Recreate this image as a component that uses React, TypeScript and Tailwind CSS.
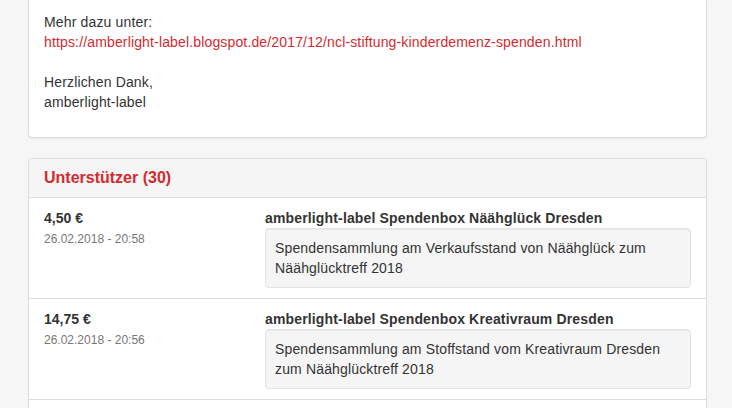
export default function App() {
  const supporters = [
    {
      amount: "4,50 €",
      date: "26.02.2018 - 20:58",
      name: "amberlight-label Spendenbox Näähglück Dresden",
      note: "Spendensammlung am Verkaufsstand von Näähglück zum Näähglücktreff 2018",
    },
    {
      amount: "14,75 €",
      date: "26.02.2018 - 20:56",
      name: "amberlight-label Spendenbox Kreativraum Dresden",
      note: "Spendensammlung am Stoffstand vom Kreativraum Dresden zum Näähglücktreff 2018",
    },
  ];

  return (
    <div className="min-h-screen h-[408px] overflow-hidden bg-[#f6f6f6] font-['Liberation_Sans',Arial,sans-serif] text-[14px] leading-[20px] tracking-[0.15px] text-[#333]">
      <div className="ml-[28px] w-[679px]">
        {/* Description card (scrolled, top is cut off) */}
        <div className="bg-white border border-t-0 border-[#ddd] rounded-b-[4px] shadow-[0_1px_1px_rgba(0,0,0,0.05)] px-[15px] pt-[12px] pb-[15px]">
          <p className="mb-[20px]">
            Mehr dazu unter:
            <br />
            <a href="#" className="text-[#d42a2f]">
              https://amberlight-label.blogspot.de/2017/12/ncl-stiftung-kinderdemenz-spenden.html
            </a>
          </p>
          <p className="mb-[10px]">
            Herzlichen Dank,
            <br />
            amberlight-label
          </p>
        </div>

        {/* Supporters */}
        <div className="mt-[20px] bg-white border border-[#ddd] rounded-[4px] shadow-[0_1px_1px_rgba(0,0,0,0.05)]">
          <div className="bg-[#f5f5f5] border-b border-[#ddd] rounded-t-[3px] px-[15px] py-[10px]">
            <h3 className="text-[16px] leading-[18px] font-bold tracking-normal text-[#d42a2f]">Unterstützer (30)</h3>
          </div>
          {supporters.map((s, i) => (
            <div key={i} className="flex border-b border-[#ddd] px-[15px] py-[10px]">
              <div className="w-[221px] shrink-0">
                <div className="font-bold tracking-normal">{s.amount}</div>
                <div className="text-[12px] leading-[17px] mt-[3px] tracking-normal text-[#777]">{s.date}</div>
              </div>
              <div className="flex-1">
                <div className="font-bold">{s.name}</div>
                <div className="bg-[#f5f5f5] border border-[#e3e3e3] rounded-[4px] shadow-[inset_0_1px_1px_rgba(0,0,0,0.05)] p-[9px]">
                  {s.note}
                </div>
              </div>
            </div>
          ))}
          {/* next row, content below the fold */}
          <div className="h-[40px]" />
        </div>
      </div>
    </div>
  );
}
